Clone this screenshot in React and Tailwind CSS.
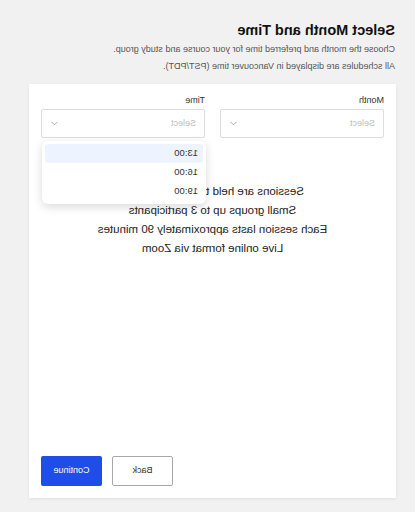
import React from 'react';

const ChevronDown = () => (
  <svg width="9" height="9" viewBox="0 0 10 10" fill="none" stroke="#a3a3a3" strokeWidth="1" strokeLinecap="round" strokeLinejoin="round">
    <path d="M2 3.5 L5 6.5 L8 3.5" />
  </svg>
);

const SelectBox = ({ label, children }) => (
  <div className="relative flex-1">
    <div className="text-[9px] leading-[12px] text-[#333] mb-[3px]">{label}</div>
    <div className="h-[29px] border border-[#dcdcdc] rounded-[2px] bg-white flex items-center justify-between pl-[8px] pr-[8px]">
      <span className="text-[9px] text-[#bdbdbd]">Select</span>
      <ChevronDown />
    </div>
    {children}
  </div>
);

const times = ['13:00', '16:00', '19:00'];

export default function App() {
  return (
    <div
      className="w-[415px] h-[512px] bg-[#f1f1f1] overflow-hidden -scale-x-100"
      style={{ fontFamily: '"Liberation Sans", Arial, sans-serif' }}
    >
      <div className="px-[20px] pt-[20px]">
        <h1 className="text-[14.5px] leading-[20px] font-bold text-[#111]">Select Month and Time</h1>
        <p className="mt-[1px] text-[9px] leading-[17px] text-[#555]">
          Choose the month and preferred time for your course and study group.
        </p>
        <p className="text-[9px] leading-[17px] text-[#555]">
          All schedules are displayed in Vancouver time (PST/PDT).
        </p>
      </div>

      <div className="ml-[19px] mt-[9px] w-[367px] h-[414px] bg-white shadow-[0_1px_3px_rgba(0,0,0,0.08)] flex flex-col justify-between px-[12px] pt-[10px] pb-[12px]">
        <div>
          <div className="flex gap-[15px]">
            <SelectBox label="Month" />
            <SelectBox label="Time">
              <div className="absolute left-[-1px] top-[47px] w-[164px] bg-white rounded-[6px] shadow-[0_3px_10px_rgba(0,0,0,0.15)] p-[3px] z-10">
                {times.map((t, i) => (
                  <div
                    key={t}
                    className={`h-[19px] flex items-center px-[5px] text-[9.5px] text-[#333] rounded-[4px] ${i === 0 ? 'bg-[#edf3ff]' : ''}`}
                  >
                    {t}
                  </div>
                ))}
              </div>
            </SelectBox>
          </div>

          <div className="mt-[44px] text-center text-[11.5px] leading-[19px] text-[#222]">
            <p>Sessions are held two times a week</p>
            <p>Small groups up to 3 participants</p>
            <p>Each session lasts approximately 90 minutes</p>
            <p>Live online format via Zoom</p>
          </div>
        </div>

        <div className="flex justify-end gap-[10px]">
          <button className="w-[61px] h-[30px] border border-[#a8a8a8] rounded-[2px] bg-white text-[9px] text-[#333]">
            Back
          </button>
          <button className="w-[61px] h-[30px] rounded-[2px] bg-[#1f4de8] text-[9px] text-white">
            Continue
          </button>
        </div>
      </div>
    </div>
  );
}
